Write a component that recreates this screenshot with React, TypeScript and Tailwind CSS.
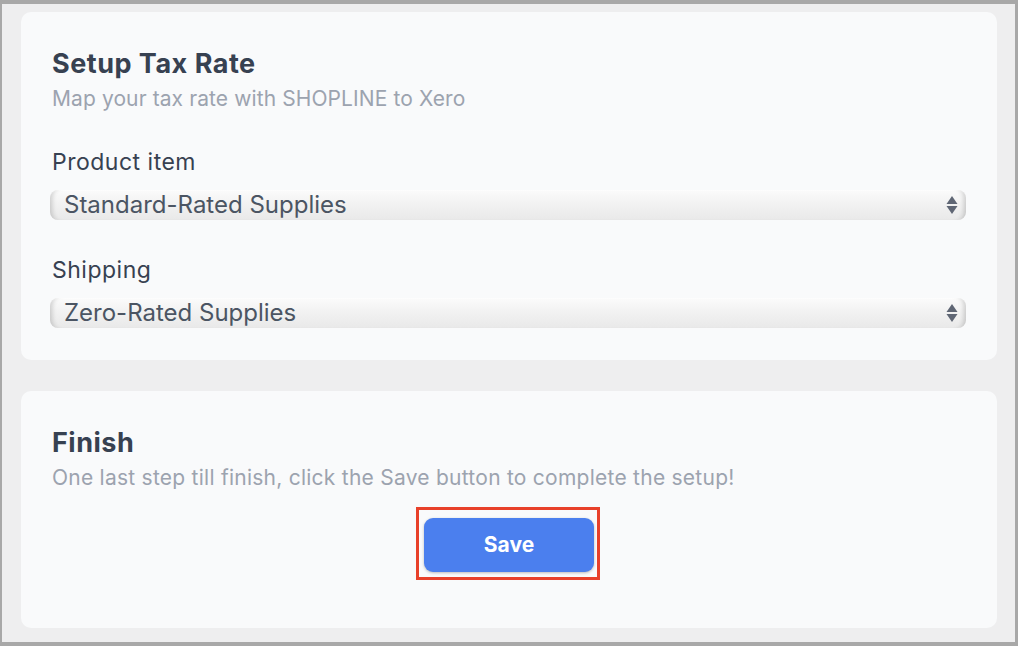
const SelectBox = ({ value }: { value: string }) => (
  <div className="relative h-[30px] w-full rounded-[8px] bg-[linear-gradient(to_bottom,#fbfbfb_0%,#f1f1f1_50%,#e9e9e9_100%)] shadow-[inset_6px_0_5px_-4px_rgba(0,0,0,0.18),inset_-6px_0_5px_-4px_rgba(0,0,0,0.18),inset_0_1px_1px_rgba(255,255,255,0.9)] flex items-center pl-[14px] pr-8">
    <span className="text-[24px] leading-none text-[#4b5563]">{value}</span>
    <div className="absolute right-[8px] top-1/2 -translate-y-1/2 flex flex-col items-center">
      <svg width="12" height="9" viewBox="0 0 12 9">
        <path d="M6 0.5 L11.5 8.5 L0.5 8.5 Z" fill="#5f6674" />
      </svg>
      <svg width="12" height="9" viewBox="0 0 12 9" className="mt-[1px]">
        <path d="M0.5 0.5 L11.5 0.5 L6 8.5 Z" fill="#5f6674" />
      </svg>
    </div>
  </div>
);

export default function App() {
  return (
    <div
      className="w-[1018px] h-[646px] bg-[#a8a8a8] pt-[4px] pl-[2px] pr-[3px] pb-[4px]"
      style={{ fontFamily: 'Inter, "Noto Sans", sans-serif' }}
    >
      <div className="h-full w-full bg-[#eeeeef] pt-[8px] pl-[19px] pr-[18px] flex flex-col gap-[31px]">
        <section className="rounded-[10px] bg-[#f9fafb] pt-[36px] pb-[32px] pl-[31px] pr-[31px]">
          <h2 className="text-[27px] leading-[32px] font-bold tracking-[0.5px] text-[#374151]">Setup Tax Rate</h2>
          <p className="mt-[6px] text-[21px] leading-[26px] tracking-[0.1px] text-[#9ca3af]">
            Map your tax rate with SHOPLINE to Xero
          </p>
          <div className="mt-[36px] text-[23px] leading-[28px] tracking-[0.5px] text-[#374151]">Product item</div>
          <div className="mt-[14px] -ml-[2px]">
            <SelectBox value="Standard-Rated Supplies" />
          </div>
          <div className="mt-[36px] text-[23px] leading-[28px] tracking-[0.5px] text-[#374151]">Shipping</div>
          <div className="mt-[14px] -ml-[2px]">
            <SelectBox value="Zero-Rated Supplies" />
          </div>
        </section>
        <section className="rounded-[10px] bg-[#f9fafb] pt-[36px] pb-[48px] pl-[31px] pr-[31px] flex flex-col">
          <h2 className="text-[27px] leading-[32px] font-bold tracking-[0.5px] text-[#374151]">Finish</h2>
          <p className="mt-[6px] text-[21px] leading-[26px] tracking-[0.25px] text-[#9ca3af]">
            One last step till finish, click the Save button to complete the setup!
          </p>
          <div className="mt-[16px] self-center -translate-x-[1px] border-[3px] border-[#e8402a] pt-[8px] pb-[5px] pl-[5px] pr-[3px]">
            <button className="w-[170px] h-[54px] rounded-[9px] bg-[#4b7fee] text-white text-[21px] font-bold shadow-[0_1px_3px_rgba(0,0,0,0.25)]">
              Save
            </button>
          </div>
        </section>
      </div>
    </div>
  );
}
